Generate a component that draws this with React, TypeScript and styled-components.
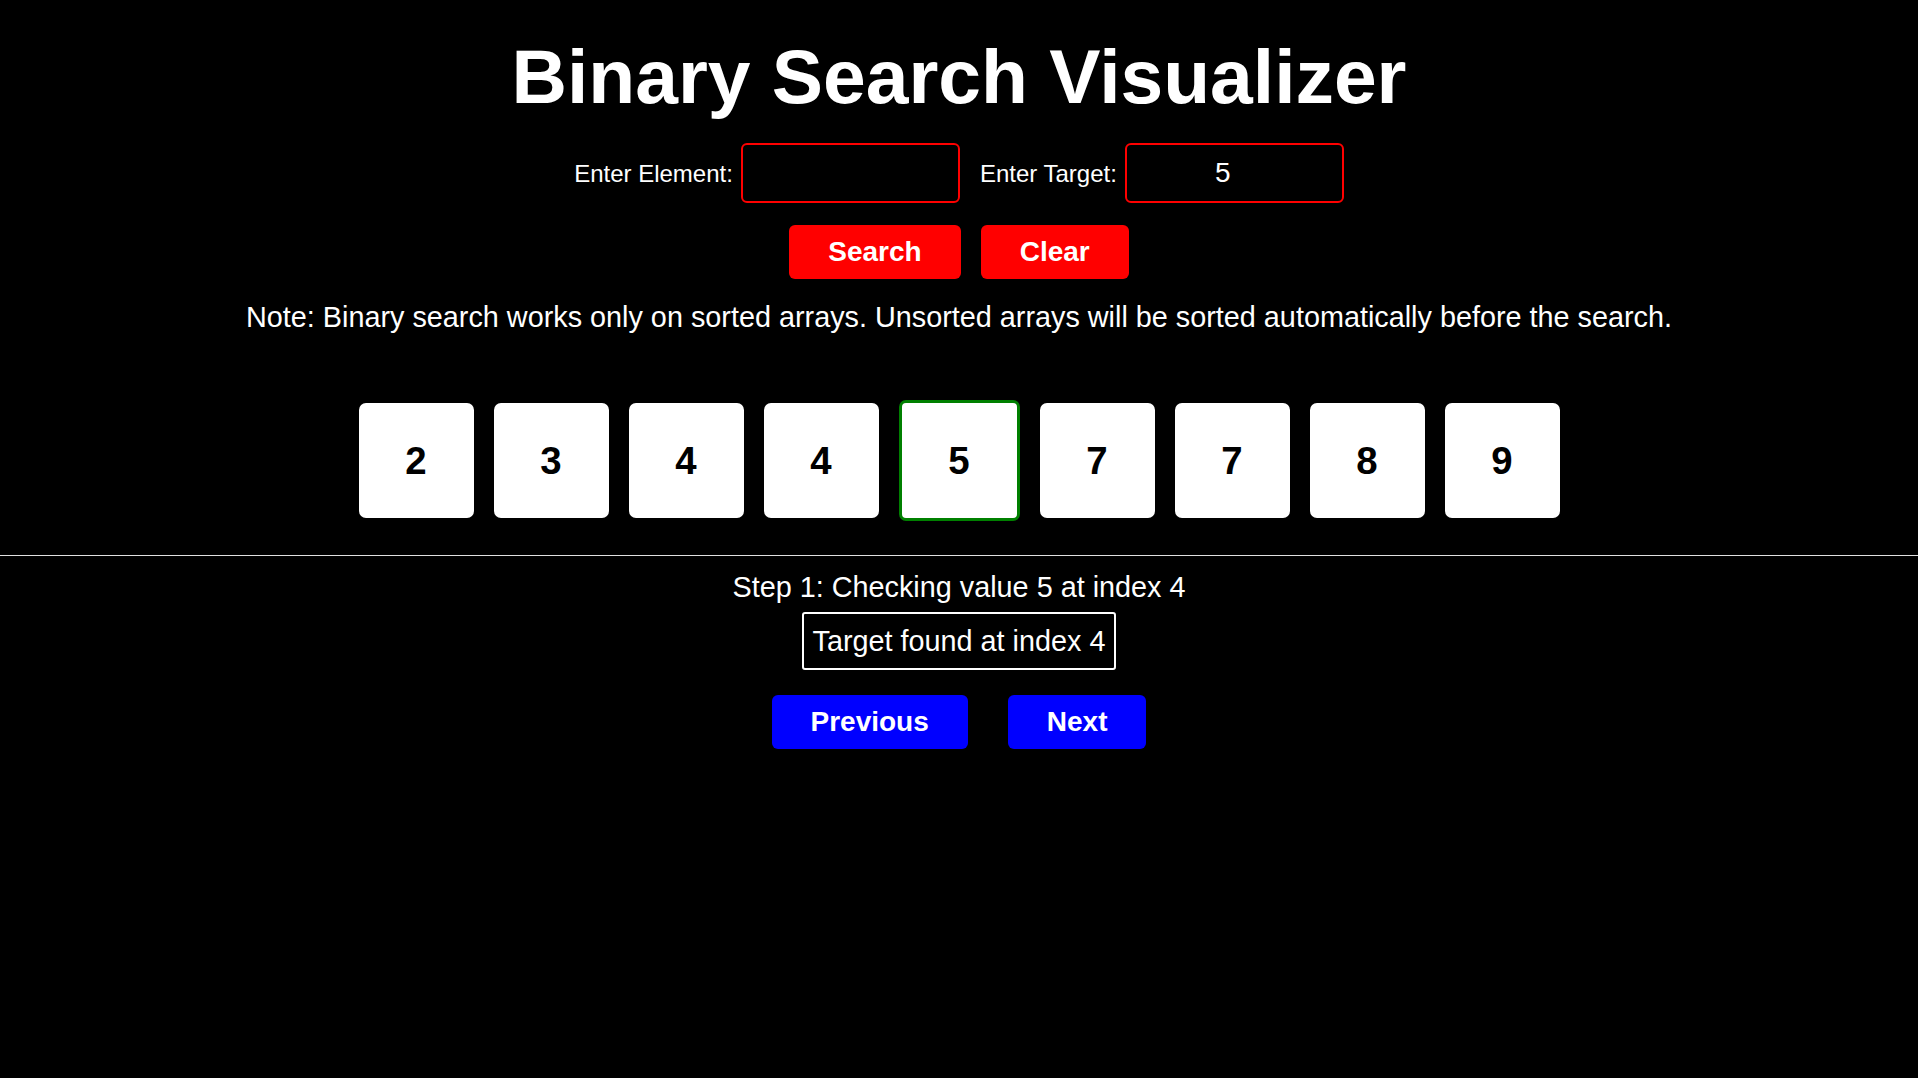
import React, { useState } from 'react';
import styled, { createGlobalStyle } from 'styled-components';

const GlobalStyle = createGlobalStyle`
    body {
        margin: 0;
        background: #000;
        color: #fff;
        font-family: "Liberation Sans", Arial, sans-serif;
    }
`;

const Page = styled.div`
    display: flex;
    flex-direction: column;
    align-items: center;
    text-align: center;
    min-height: 1078px;
`;

const Title = styled.h1`
    margin: 32px 0 0;
    font-size: 76.8px;
    font-weight: bold;
    line-height: 88px;
`;

const InputRow = styled.div`
    display: flex;
    align-items: baseline;
    margin-top: 23px;
`;

const Field = styled.label`
    display: flex;
    align-items: baseline;
    gap: 8px;
    font-size: 24px;

    & + & {
        margin-left: 20px;
    }
`;

const TextInput = styled.input`
    box-sizing: border-box;
    width: 219px;
    height: 60px;
    padding: 1px 10px 1px 2px;
    border: 2px solid #ff0000;
    border-radius: 6px;
    background: #000;
    color: #fff;
    font-family: inherit;
    font-size: 28px;
    text-align: center;
    outline: none;
`;

const ButtonRow = styled.div<{ $gap: number; $top: number }>`
    display: flex;
    gap: ${(p) => p.$gap}px;
    margin-top: ${(p) => p.$top}px;
`;

const ActionButton = styled.button<{ $color: string }>`
    padding: 11px 39px;
    border: none;
    border-radius: 6px;
    background: ${(p) => p.$color};
    color: #fff;
    font-family: inherit;
    font-size: 28px;
    font-weight: bold;
    line-height: 32px;
    cursor: pointer;
`;

const Note = styled.p`
    margin: 22px 0 0;
    font-size: 28.8px;
    line-height: 33px;
`;

const ArrayRow = styled.div`
    display: flex;
    align-items: center;
    gap: 20px;
    margin-top: 66px;
    height: 121px;
`;

const Cell = styled.div<{ $active: boolean }>`
    display: flex;
    align-items: center;
    justify-content: center;
    width: 115px;
    height: 115px;
    border: ${(p) => (p.$active ? '3px solid #008000' : 'none')};
    border-radius: 7px;
    background: #fff;
    color: #000;
    font-size: 38.4px;
    font-weight: bold;
`;

const Divider = styled.hr`
    align-self: stretch;
    height: 0;
    margin: 34px 0 0;
    border: none;
    border-top: 1px solid #e0e0e0;
`;

const StepText = styled.p`
    margin: 15px 0 0;
    font-size: 28.8px;
    line-height: 33px;
`;

const Result = styled.div`
    margin-top: 8px;
    padding: 10px 9px;
    border: 2px solid #fff;
    border-radius: 3px;
    font-size: 28.8px;
    line-height: 34px;
`;

interface Step {
    mid: number;
    low: number;
    high: number;
}

const App: React.FC = () => {
    const [element, setElement] = useState('');
    const [target, setTarget] = useState('5');
    const [items, setItems] = useState<number[]>([2, 3, 4, 4, 5, 7, 7, 8, 9]);
    const [steps, setSteps] = useState<Step[]>([{ mid: 4, low: 0, high: 8 }]);
    const [current, setCurrent] = useState(0);

    const addElement = (e: React.KeyboardEvent<HTMLInputElement>) => {
        if (e.key !== 'Enter' || element.trim() === '') return;
        const value = Number(element);
        if (Number.isNaN(value)) return;
        setItems([...items, value].sort((a, b) => a - b));
        setElement('');
    };

    const search = () => {
        const t = Number(target);
        const found: Step[] = [];
        let low = 0;
        let high = items.length - 1;
        while (low <= high) {
            const mid = Math.floor((low + high) / 2);
            found.push({ mid, low, high });
            if (items[mid] === t) break;
            if (items[mid] < t) low = mid + 1;
            else high = mid - 1;
        }
        setSteps(found);
        setCurrent(0);
    };

    const clear = () => {
        setItems([]);
        setSteps([]);
        setTarget('');
        setElement('');
        setCurrent(0);
    };

    const step = steps[current];
    const isLast = current === steps.length - 1;
    const foundIt = step && items[step.mid] === Number(target);

    return (
        <>
            <GlobalStyle />
            <Page>
                <Title>Binary Search Visualizer</Title>
                <InputRow>
                    <Field>
                        Enter Element:
                        <TextInput
                            type="number"
                            value={element}
                            onChange={(e) => setElement(e.target.value)}
                            onKeyDown={addElement}
                        />
                    </Field>
                    <Field>
                        Enter Target:
                        <TextInput type="number" value={target} onChange={(e) => setTarget(e.target.value)} />
                    </Field>
                </InputRow>
                <ButtonRow $gap={20} $top={22}>
                    <ActionButton $color="#ff0000" onClick={search}>
                        Search
                    </ActionButton>
                    <ActionButton $color="#ff0000" onClick={clear}>
                        Clear
                    </ActionButton>
                </ButtonRow>
                <Note>
                    Note: Binary search works only on sorted arrays. Unsorted arrays will be sorted automatically
                    before the search.
                </Note>
                <ArrayRow>
                    {items.map((value, index) => (
                        <Cell key={index} $active={!!step && step.mid === index}>
                            {value}
                        </Cell>
                    ))}
                </ArrayRow>
                <Divider />
                {step && (
                    <>
                        <StepText>
                            Step {current + 1}: Checking value {items[step.mid]} at index {step.mid}
                        </StepText>
                        {isLast && (
                            <Result>{foundIt ? `Target found at index ${step.mid}` : 'Target not found'}</Result>
                        )}
                    </>
                )}
                <ButtonRow $gap={40} $top={25}>
                    <ActionButton $color="#0000ff" onClick={() => setCurrent(Math.max(0, current - 1))}>
                        Previous
                    </ActionButton>
                    <ActionButton
                        $color="#0000ff"
                        onClick={() => setCurrent(Math.min(steps.length - 1, current + 1))}
                    >
                        Next
                    </ActionButton>
                </ButtonRow>
            </Page>
        </>
    );
};

export default App;
